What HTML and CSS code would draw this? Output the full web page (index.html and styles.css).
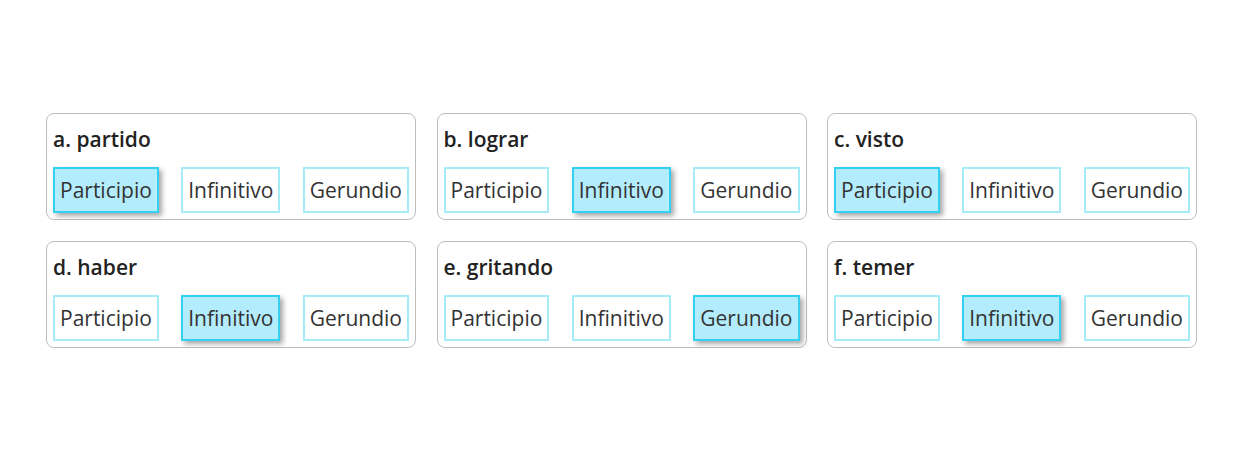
FILE: index.html
```html
<!DOCTYPE html>
<html lang="es">
<head>
<meta charset="utf-8">
<title>Formas verbales</title>
<link rel="stylesheet" href="styles.css">
</head>
<body>
<main class="grid">
  <section class="card">
    <h2 class="title">a. partido</h2>
    <div class="options">
      <button class="opt selected">Participio</button>
      <button class="opt">Infinitivo</button>
      <button class="opt">Gerundio</button>
    </div>
  </section>
  <section class="card">
    <h2 class="title">b. lograr</h2>
    <div class="options">
      <button class="opt">Participio</button>
      <button class="opt selected">Infinitivo</button>
      <button class="opt">Gerundio</button>
    </div>
  </section>
  <section class="card">
    <h2 class="title">c. visto</h2>
    <div class="options">
      <button class="opt selected">Participio</button>
      <button class="opt">Infinitivo</button>
      <button class="opt">Gerundio</button>
    </div>
  </section>
  <section class="card">
    <h2 class="title">d. haber</h2>
    <div class="options">
      <button class="opt">Participio</button>
      <button class="opt selected">Infinitivo</button>
      <button class="opt">Gerundio</button>
    </div>
  </section>
  <section class="card">
    <h2 class="title">e. gritando</h2>
    <div class="options">
      <button class="opt">Participio</button>
      <button class="opt">Infinitivo</button>
      <button class="opt selected">Gerundio</button>
    </div>
  </section>
  <section class="card">
    <h2 class="title">f. temer</h2>
    <div class="options">
      <button class="opt">Participio</button>
      <button class="opt selected">Infinitivo</button>
      <button class="opt">Gerundio</button>
    </div>
  </section>
</main>
</body>
</html>
```
FILE: styles.css
```css
html, body {
  margin: 0;
  padding: 0;
  background: #ffffff;
}
body {
  font-family: "Open Sans", "Noto Sans", sans-serif;
  color: #222;
}
.grid {
  display: grid;
  grid-template-columns: repeat(3, 370px);
  column-gap: 20.5px;
  row-gap: 21px;
  padding: 113px 0 0 46px;
}
.card {
  border: 1px solid #bdbdbd;
  border-radius: 8px;
  padding: 6px 6px 6px 6px;
  height: 107px;
  box-sizing: border-box;
}
.title {
  margin: 0 0 14px 0;
  padding: 5px 0 0 0;
  font-size: 21px;
  line-height: 28px;
  font-weight: 600;
  color: #222;
}
.options {
  display: flex;
  justify-content: space-between;
}
.opt {
  font-family: inherit;
  font-size: 21px;
  color: #333;
  background: #fff;
  border: 2px solid #a6ecf8;
  height: 46px;
  padding: 1px 5px 0;
  margin: 0;
  border-radius: 0;
  line-height: 1;
}
.opt.selected {
  background: #b3ecfd;
  border-color: #33d0f0;
  box-shadow: 3px 3px 5px rgba(0, 0, 0, 0.35);
}
```
